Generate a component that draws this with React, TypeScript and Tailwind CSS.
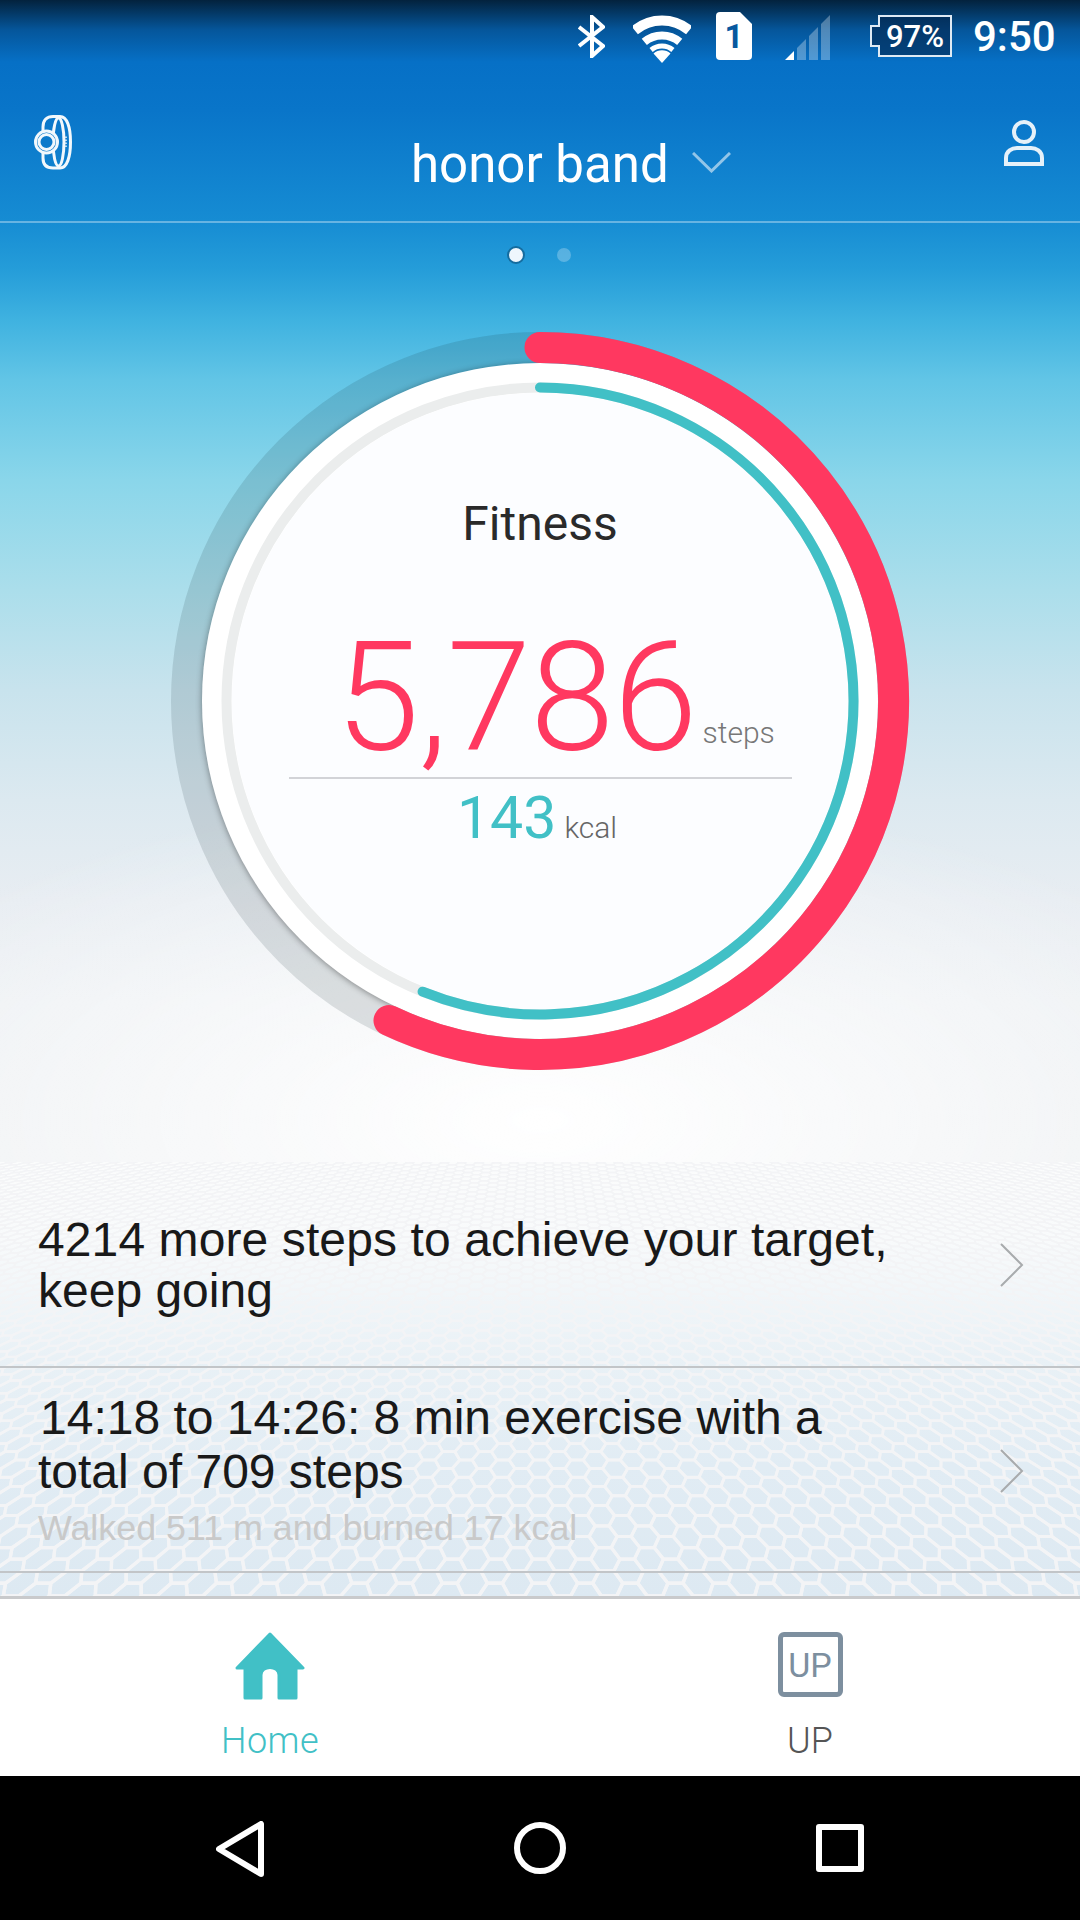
import { ReactNode } from 'react';

// honeycomb lying on a floor plane, seen in perspective
const HORIZON = 900 - 1163;
const BOTTOM = 1597 - 1163;
const FULL = BOTTOM - HORIZON;

const buildHexRows = () => {
  const pitch = 46;
  const a = pitch / 3;
  const dw = 13 / (FULL * FULL);
  const rows: { d: string; w: number }[] = [];
  const project = (X: number, w: number) => {
    const dist = 1 / w;
    return [540 + (X * dist) / FULL, HORIZON + dist];
  };
  for (let j = -3; j < 90; j++) {
    const w = 1 / FULL + j * dw;
    const dist = 1 / w;
    if (dist + HORIZON < -10) continue;
    const scale = dist / FULL;
    const half = Math.ceil(620 / (pitch * scale));
    let d = '';
    for (let i = -half; i <= half; i++) {
      const X = (i + (j % 2 ? 0.5 : 0)) * pitch;
      const pts = [
        project(X - a, w),
        project(X - a / 2, w + dw),
        project(X + a / 2, w + dw),
        project(X + a, w),
        project(X + a / 2, w - dw),
        project(X - a / 2, w - dw),
      ];
      d += 'M' + pts.map((p) => `${p[0].toFixed(1)} ${p[1].toFixed(1)}`).join('L') + 'Z';
    }
    rows.push({ d, w: Math.max(0.6, 3.4 * scale) });
  }
  return rows;
};

const hexRows = buildHexRows();

const HexFloor = () => (
  <svg className="absolute inset-0" width="1080" height="434" viewBox="0 0 1080 434" fill="none">
    {hexRows.map((r, idx) => (
      <path key={idx} d={r.d} stroke="#f3f4f6" strokeWidth={r.w} />
    ))}
  </svg>
);

const StatusBar = () => (
  <div className="flex h-[73px] items-start text-white">
    <svg className="ml-[578px] mt-[15px]" width="27" height="43" viewBox="0 0 27 43" fill="none" stroke="#fff" strokeWidth="4">
      <path d="M1 12 L25 31 L14 41 L14 2 L25 12 L1 31" />
    </svg>
    <svg className="ml-[28px] mt-[15px]" width="58" height="48" viewBox="0 0 58 48" fill="none" stroke="#fff">
      <path d="M1.7 15.4 A42.5 42.5 0 0 1 56.3 15.4" strokeWidth="10" />
      <path d="M11.3 26.9 A27.5 27.5 0 0 1 46.7 26.9" strokeWidth="8" />
      <path d="M18.1 35 A17 17 0 0 1 39.9 35" strokeWidth="5" />
      <path d="M29 48 L20.5 38.5 A13 13 0 0 1 37.5 38.5 Z" fill="#fff" stroke="none" />
    </svg>
    <div className="relative ml-[25px] mt-[12px] flex h-[48px] w-[36px] items-center justify-center">
      <svg className="absolute inset-0" width="36" height="48" viewBox="0 0 36 48">
        <path d="M4 0 H24 L36 12 V44 a4 4 0 0 1 -4 4 H4 a4 4 0 0 1 -4 -4 V4 a4 4 0 0 1 4 -4 Z" fill="#fff" />
      </svg>
      <span className="relative text-[33px] font-bold leading-none text-[#07589f]">1</span>
    </div>
    <svg className="ml-[33px] mt-[15px]" width="45" height="45" viewBox="0 0 45 45" fill="#fff">
      <path d="M0 45 L9 36 V45 Z" />
      <path d="M12 33 L21 24 V45 H12 Z" opacity="0.3" />
      <path d="M24 21 L33 12 V45 H24 Z" opacity="0.3" />
      <path d="M36 9 L45 0 V45 H36 Z" opacity="0.3" />
    </svg>
    <svg className="ml-[40px] mt-[15px]" width="82" height="42" viewBox="0 0 82 42">
      <path d="M9 1 H81 V41 H9 V31 H1 V11 H9 Z" fill="#03264f" fillOpacity="0.6" stroke="#dfeaf4" strokeWidth="2" />
      <text x="45" y="32" textAnchor="middle" fill="#fff" fontSize="31" fontWeight="500" fontFamily="Roboto, sans-serif">97%</text>
    </svg>
    <span className="ml-[21px] mt-[13px] text-[42px] font-medium leading-[48px]">9:50</span>
  </div>
);

const Toolbar = () => (
  <div className="flex h-[150px] items-start border-b-2 border-white/35">
    <svg className="ml-[34px] mt-[42px]" width="38" height="55" viewBox="0 0 38 55" fill="none" stroke="#f2f8fc" strokeWidth="3">
      <path d="M9 16 V12 C9 5 13 1.5 19 1.5 H26 C33 1.5 36.5 12 36.5 27 C36.5 42 33 53 26 53 H19 C13 53 9 50 9 43 V38" />
      <ellipse cx="24.5" cy="27" rx="5.5" ry="24" />
      <circle cx="12.5" cy="27" r="11" fill="#0c7acb" />
      <circle cx="12.5" cy="27" r="7.5" />
      <path d="M32 21.5 V33" strokeWidth="1.5" strokeDasharray="1.5 1.5" />
    </svg>
    <span className="ml-[339px] mt-[62px] text-[51px] leading-[60px] text-white">honor band</span>
    <svg className="ml-[23px] mt-[79px]" width="39" height="21" viewBox="0 0 39 21" fill="none" stroke="#fff" strokeOpacity="0.55" strokeWidth="3">
      <path d="M1 1 L19.5 19 L38 1" />
    </svg>
    <svg className="ml-[273px] mt-[47px]" width="40" height="46" viewBox="0 0 40 46" fill="none" stroke="#e6f1f9" strokeWidth="4">
      <circle cx="20" cy="12" r="10" />
      <path d="M2 44 V38 C2 31 8 28 13 28 H27 C32 28 38 31 38 38 V44 Z" />
    </svg>
  </div>
);

const Rings = () => (
  <svg className="absolute inset-0" width="740" height="740" viewBox="-370 -370 740 740" fill="none">
    <circle r="353.5" stroke="#10242f" strokeOpacity="0.13" strokeWidth="31" />
    <circle r="338" fill="#fff" className="drop-shadow-[0_1px_3px_rgba(0,0,0,0.4)]" />
    <circle r="313.5" stroke="#ebeded" strokeWidth="10" />
    <circle r="308" fill="#fcfdff" />
    <path d="M0 -353.5 A353.5 353.5 0 1 1 -151 319.6" stroke="#ff3860" strokeWidth="31" strokeLinecap="round" />
    <path d="M0 -313.5 A313.5 313.5 0 1 1 -117.4 290.7" stroke="#41c0c6" strokeWidth="10" strokeLinecap="round" />
  </svg>
);

const FitnessDial = () => (
  <div className="relative mx-auto mt-[67px] h-[740px] w-[740px]">
    <Rings />
    <div className="relative flex flex-col items-center pt-[166px]">
      <span className="text-[48px] leading-[54px] text-[#2a2a2a]">Fitness</span>
      <div className="mt-[72px] flex h-[150px] items-baseline pl-[30px]">
        <span className="text-[152px] font-light leading-[150px] tracking-[-1px] text-[#ff3860]">5,786</span>
        <span className="ml-[6px] -translate-y-[7px] text-[30px] font-light leading-none text-[#777]">steps</span>
      </div>
      <div className="mt-[4px] h-[2px] w-[503px] bg-[#d2d3d7]" />
      <div className="mt-[4px] flex items-baseline pr-[6px]">
        <span className="text-[59px] leading-[70px] text-[#41c0c6]">143</span>
        <span className="ml-[8px] text-[30px] font-light leading-none text-[#666]">kcal</span>
      </div>
    </div>
  </div>
);

const Chevron = () => (
  <svg className="absolute left-[1000px] top-[81px]" width="24" height="44" viewBox="0 0 24 44" fill="none" stroke="#a8abad" strokeWidth="2">
    <path d="M1 1 L22 22 L1 43" />
  </svg>
);

const FeedRow = ({ children, className }: { children: ReactNode; className: string }) => (
  <div className={`relative border-b-2 border-[#c2c5c8] pl-[38px] font-['Liberation_Sans',sans-serif] text-[48px] text-[#191919] ${className}`}>
    {children}
    <Chevron />
  </div>
);

const BottomTabs = () => (
  <div className="flex h-[177px] bg-white">
    <div className="flex w-[540px] flex-col items-center pt-[33px]">
      <svg width="70" height="68" viewBox="0 0 70 68" fill="#41c0c6" stroke="#41c0c6" strokeWidth="3" strokeLinejoin="round">
        <path d="M35 2 L68 36 H61 V66 H44 V43 C44 33 26 33 26 43 V66 H10 V36 H2 Z" />
      </svg>
      <span className="mt-[21px] text-[36px] font-light leading-[40px] tracking-[0.5px] text-[#41c0c6]">Home</span>
    </div>
    <div className="flex w-[540px] flex-col items-center pt-[33px]">
      <div className="flex h-[65px] w-[65px] items-center justify-center rounded-[6px] border-[5px] border-[#7d8f9f] text-[34px] leading-none text-[#7d8f9f]">
        UP
      </div>
      <span className="mt-[24px] text-[36px] font-light leading-[40px] text-[#555]">UP</span>
    </div>
  </div>
);

const NavBar = () => (
  <div className="flex h-[144px] items-start bg-black">
    <svg className="ml-[216px] mt-[45px]" width="48" height="56" viewBox="0 0 48 56" fill="none" stroke="#fff" strokeWidth="6" strokeLinejoin="round">
      <path d="M3 28 L45 3 V53 Z" />
    </svg>
    <svg className="ml-[250px] mt-[46px]" width="52" height="52" viewBox="0 0 52 52" fill="none" stroke="#fff" strokeWidth="6">
      <circle cx="26" cy="26" r="23" />
    </svg>
    <div className="ml-[250px] mt-[48px] h-[48px] w-[48px] rounded-[3px] border-[6px] border-white" />
  </div>
);

export default function App() {
  return (
    <div className="flex h-[1920px] w-[1080px] flex-col overflow-hidden bg-white font-['Roboto',sans-serif]">
      <div className="h-[1163px] bg-[radial-gradient(ellipse_760px_330px_at_50%_1120px,#ffffff_0%,rgba(255,255,255,0)_100%),linear-gradient(180deg,#03223d_0px,#05569b_30px,#0670c6_62px,#0975c9_110px,#168cd3_221px,#259dd9_270px,#3fb2e0_320px,#62c5e6_380px,#8ad6ea_480px,#abdeeb_590px,#c8e3ed_690px,#dce9f0_800px,#e8edf2_900px,#eef1f4_1000px,#f0f2f4_1163px)]">
        <StatusBar />
        <Toolbar />
        <div className="mt-[23px] flex items-center justify-center gap-[32px] pr-[2px]">
          <div className="h-[18px] w-[18px] rounded-full border-2 border-[#146c9f] bg-[#eef6fd]" />
          <div className="h-[14px] w-[14px] rounded-full bg-white/25" />
        </div>
        <FitnessDial />
      </div>
      <div className="relative h-[434px] bg-[linear-gradient(180deg,#fbfcfc_0%,#f8fafb_18%,#e9f1f6_45%,#e1ecf4_70%,#dde9f2_100%)]">
        <HexFloor />
        <FeedRow className="h-[206px] pt-[52px] leading-[51px]">
          <p className="tracking-[0.1px]">4214 more steps to achieve your target,</p>
          <p>keep going</p>
        </FeedRow>
        <FeedRow className="h-[205px] pt-[23px] leading-[54px]">
          <p className="pl-[2px]">14:18 to 14:26: 8 min exercise with a</p>
          <p>total of 709 steps</p>
          <p className="mt-[5px] text-[35.8px] leading-[48px] text-[#c9c9c9]">Walked 511 m and burned 17 kcal</p>
        </FeedRow>
      </div>
      <div className="h-[3px] bg-[#c9cacc]" />
      <BottomTabs />
      <NavBar />
    </div>
  );
}
